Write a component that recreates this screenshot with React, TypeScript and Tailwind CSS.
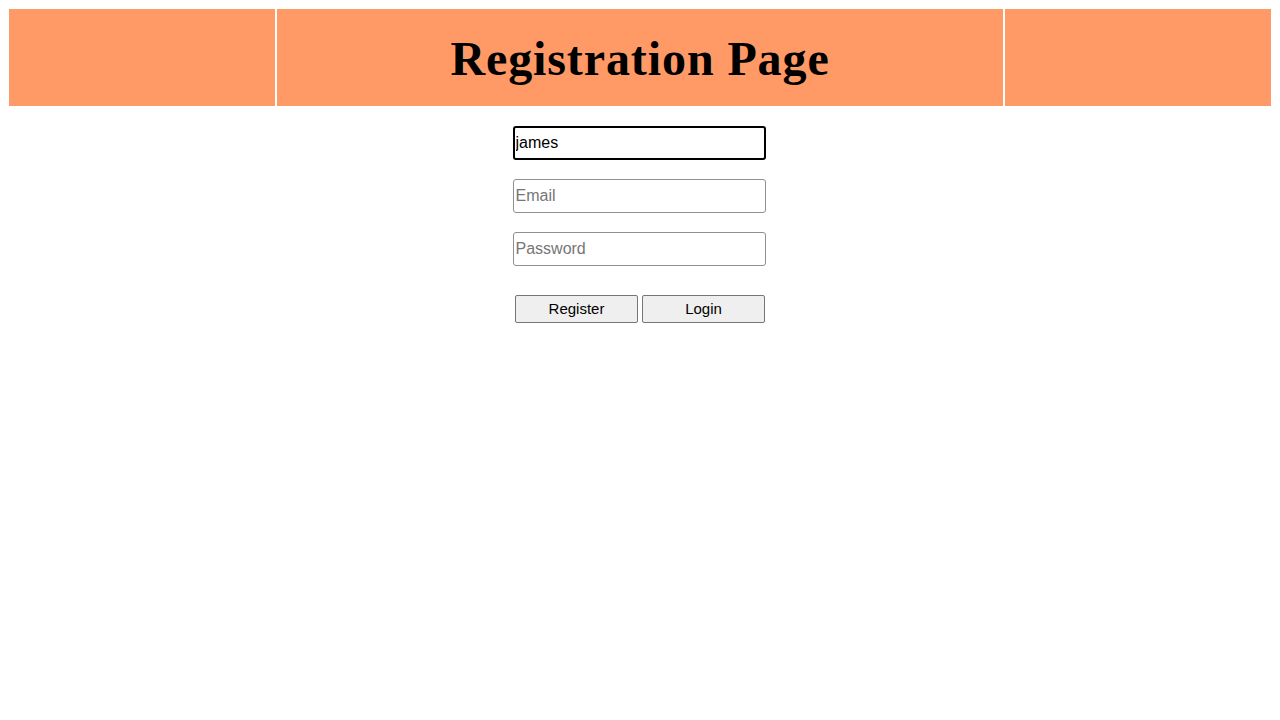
const inputBase =
  "w-[253px] h-[34px] text-[16px] text-black placeholder:text-[#767676] bg-white outline-none rounded-[3px]";

const App = () => {
  return (
    <div className="min-h-screen bg-white p-2" style={{ fontFamily: '"Liberation Sans", Arial, sans-serif' }}>
      <div className="flex gap-[2px] p-px h-[99px]">
        <div className="w-[266px] bg-[#ff9966]"></div>
        <div className="flex-1 bg-[#ff9966] flex items-center justify-center">
          <h1
            className="text-[48px] font-bold tracking-[0.9px] text-black pt-[2px]"
            style={{ fontFamily: '"Liberation Serif", "Times New Roman", serif' }}
          >
            Registration Page
          </h1>
        </div>
        <div className="w-[266px] bg-[#ff9966]"></div>
      </div>

      <form className="flex flex-col items-center mt-[19px] pr-[2px]" onSubmit={(e) => e.preventDefault()}>
        <div className="flex flex-col gap-[19px]">
          <input
            type="text"
            defaultValue="james"
            className={`${inputBase} px-[1px] border-2 border-black`}
          />
          <input type="email" placeholder="Email" className={`${inputBase} px-[2px] border border-[#8f8f8f]`} />
          <input type="password" placeholder="Password" className={`${inputBase} px-[2px] border border-[#8f8f8f]`} />
        </div>
        <div className="flex gap-[4px] mt-[29px] ml-[2px]">
          <button
            type="submit"
            className="w-[123px] h-[28px] text-[15px] text-black bg-[#efefef] border border-[#767676] rounded-[2px]"
          >
            Register
          </button>
          <button
            type="button"
            className="w-[123px] h-[28px] text-[15px] text-black bg-[#efefef] border border-[#767676] rounded-[2px]"
          >
            Login
          </button>
        </div>
      </form>
    </div>
  );
};

export default App;
